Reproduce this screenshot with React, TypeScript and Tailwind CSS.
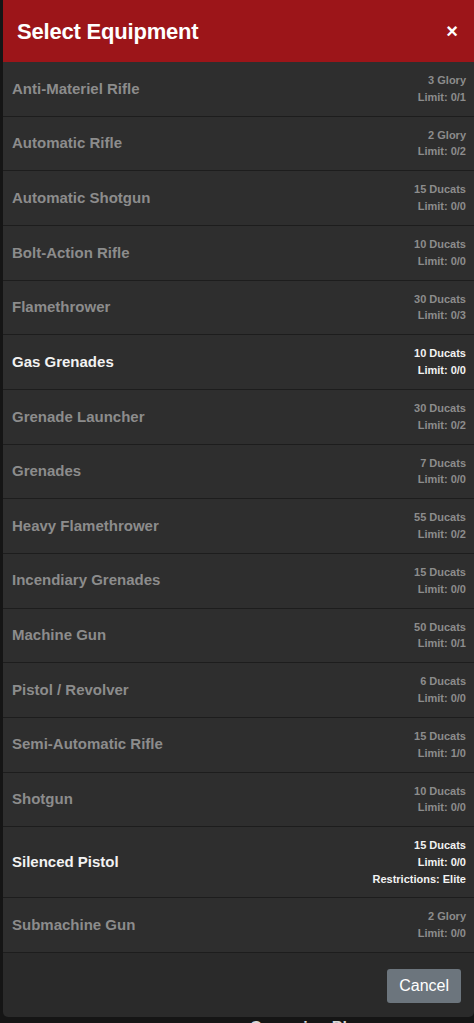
import * as React from 'react';

type Item = {
  name: string;
  cost: string;
  limit: string;
  restriction?: string;
  active?: boolean;
};

const items: Item[] = [
  { name: 'Anti-Materiel Rifle', cost: '3 Glory', limit: 'Limit: 0/1' },
  { name: 'Automatic Rifle', cost: '2 Glory', limit: 'Limit: 0/2' },
  { name: 'Automatic Shotgun', cost: '15 Ducats', limit: 'Limit: 0/0' },
  { name: 'Bolt-Action Rifle', cost: '10 Ducats', limit: 'Limit: 0/0' },
  { name: 'Flamethrower', cost: '30 Ducats', limit: 'Limit: 0/3' },
  { name: 'Gas Grenades', cost: '10 Ducats', limit: 'Limit: 0/0', active: true },
  { name: 'Grenade Launcher', cost: '30 Ducats', limit: 'Limit: 0/2' },
  { name: 'Grenades', cost: '7 Ducats', limit: 'Limit: 0/0' },
  { name: 'Heavy Flamethrower', cost: '55 Ducats', limit: 'Limit: 0/2' },
  { name: 'Incendiary Grenades', cost: '15 Ducats', limit: 'Limit: 0/0' },
  { name: 'Machine Gun', cost: '50 Ducats', limit: 'Limit: 0/1' },
  { name: 'Pistol / Revolver', cost: '6 Ducats', limit: 'Limit: 0/0' },
  { name: 'Semi-Automatic Rifle', cost: '15 Ducats', limit: 'Limit: 1/0' },
  { name: 'Shotgun', cost: '10 Ducats', limit: 'Limit: 0/0' },
  { name: 'Silenced Pistol', cost: '15 Ducats', limit: 'Limit: 0/0', restriction: 'Restrictions: Elite', active: true },
  { name: 'Submachine Gun', cost: '2 Glory', limit: 'Limit: 0/0' },
];

export default function App() {
  return (
    <div className="h-[1023px] overflow-hidden bg-[#151515] pl-[3px] font-['Liberation_Sans',Arial,sans-serif]">
      <div className="rounded-b-[5px] bg-[#2a2a2a] overflow-hidden">
        <div className="h-[62px] bg-[#9c1519] flex items-center justify-between pl-[14px] pr-[16px]">
          <h1 className="text-[22px] font-semibold text-white tracking-[-0.2px]">Select Equipment</h1>
          <button className="text-white text-[20px] leading-none font-semibold">×</button>
        </div>

        <div>
          {items.map((item) => (
            <div
              key={item.name}
              className="min-h-[54.67px] py-[10px] pl-[9px] pr-[8px] bg-[#2e2e2e] border-b border-[#1d1d1d] flex items-center justify-between"
            >
              <span className={`text-[15px] font-semibold ${item.active ? 'text-[#f2f2f2]' : 'text-[#8c8c8c]'}`}>
                {item.name}
              </span>
              <div className={`text-right text-[11px] font-semibold leading-[16.67px] ${item.active ? 'text-[#f2f2f2]' : 'text-[#8c8c8c]'}`}>
                <div>{item.cost}</div>
                <div>{item.limit}</div>
                {item.restriction && <div>{item.restriction}</div>}
              </div>
            </div>
          ))}
        </div>

        <div className="flex justify-end pt-[16px] pb-[14px] pr-[13px]">
          <button className="h-[34px] px-[12px] bg-[#6c757d] rounded-[3px] text-white text-[16px]">Cancel</button>
        </div>
      </div>
      <div className="pl-[247px] text-[#d8d8d8] text-[16px] font-semibold leading-[20px] pt-[1px]">Campaign Play</div>
    </div>
  );
}
